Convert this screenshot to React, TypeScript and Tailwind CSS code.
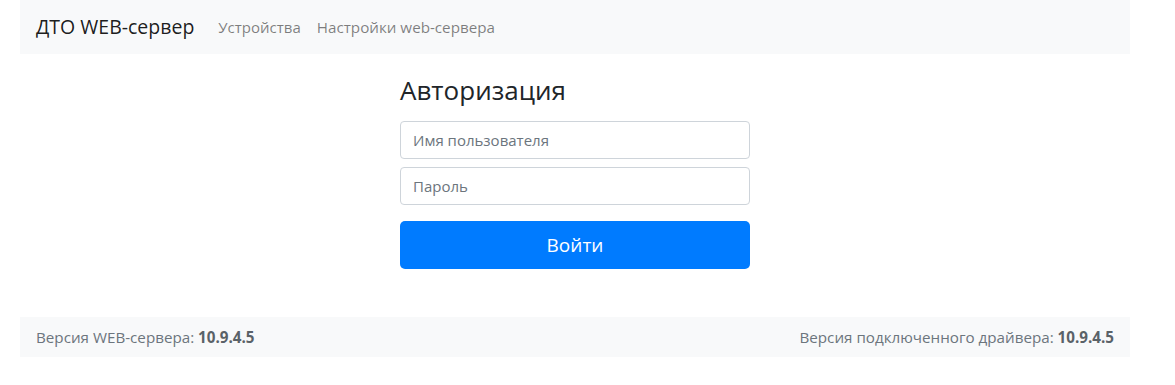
import React from "react";

export default function App() {
  const font = { fontFamily: '"Open Sans", "Noto Sans", sans-serif' };
  return (
    <div className="min-h-[385px] bg-white text-[#212529]" style={font}>
      <div className="mx-[20px] w-[1110px]">
        <nav className="flex h-[54px] items-center bg-[#f8f9fa] px-[16px]">
          <span className="mr-[16px] text-[19.5px] leading-none text-[#000000e6]">ДТО WEB-сервер</span>
          <span className="px-[8px] text-[15px] text-[#00000080]">Устройства</span>
          <span className="px-[8px] text-[15.2px] text-[#00000080]">Настройки web-сервера</span>
        </nav>
        <div className="mx-auto w-[350px] pt-[19px] pb-[48px]">
          <h3 className="mb-[14px] text-[26px] font-normal leading-[34px]">Авторизация</h3>
          <input
            className="mb-[8px] block h-[38px] w-full rounded-[4px] border border-[#ced4da] px-[12px] text-[15px] text-[#495057] placeholder-[#6c757d] outline-none"
            placeholder="Имя пользователя"
            style={font}
          />
          <input
            className="block h-[38px] w-full rounded-[4px] border border-[#ced4da] px-[12px] text-[15px] text-[#495057] placeholder-[#6c757d] outline-none"
            placeholder="Пароль"
            type="password"
            style={font}
          />
          <button
            className="mt-[16px] block h-[48px] w-full rounded-[5px] bg-[#007bff] text-[19px] text-white"
            style={font}
          >
            Войти
          </button>
        </div>
        <footer className="flex h-[40px] items-center justify-between bg-[#f8f9fa] px-[16px] text-[15.2px] text-[#6c757d]">
          <span>
            Версия WEB-сервера: <b className="font-bold text-[#5a6268]">10.9.4.5</b>
          </span>
          <span>
            Версия подключенного драйвера: <b className="font-bold text-[#5a6268]">10.9.4.5</b>
          </span>
        </footer>
      </div>
    </div>
  );
}
